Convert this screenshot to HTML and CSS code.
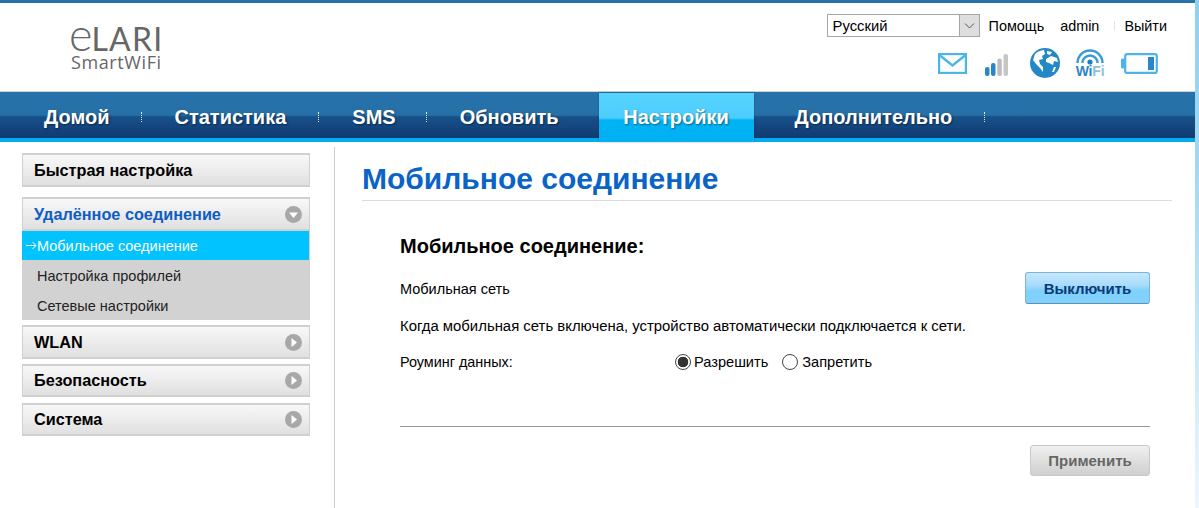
FILE: index.html
```html
<!DOCTYPE html>
<html lang="ru">
<head>
<meta charset="utf-8">
<title>Мобильное соединение</title>
<link rel="stylesheet" href="styles.css">
</head>
<body>
<div class="shell">
<div class="page">
  <header class="header">
    <div class="logo">
      <div class="logo-main"><span class="logo-e">e</span>LARI</div>
      <div class="logo-sub">SmartWiFi</div>
    </div>
    <div class="header-right">
      <div class="top-links">
        <div class="lang"><span class="lang-value">Русский</span><span class="lang-btn"><svg width="11" height="6" viewBox="0 0 11 6"><path d="M1 0.5 L5.5 5 L10 0.5" fill="none" stroke="#555" stroke-width="1"/></svg></span></div>
        <span class="tl tl-help">Помощь</span>
        <span class="tl tl-admin">admin</span>
        <span class="tl-sep"></span>
        <span class="tl">Выйти</span>
      </div>
      <div class="status-icons">
        <svg class="ic-mail" width="29" height="21" viewBox="0 0 29 21"><rect x="1.1" y="1.1" width="26.8" height="18.8" fill="#fff" stroke="#4db4e8" stroke-width="2.2"/><path d="M2 2.5 L14.5 12.5 L27 2.5" fill="none" stroke="#4db4e8" stroke-width="2.4"/></svg>
        <svg class="ic-signal" width="23" height="22" viewBox="0 0 23 22"><rect x="0" y="13" width="4.5" height="9" rx="2" fill="#2a86c6"/><rect x="6" y="9" width="4.5" height="13" rx="2" fill="#2a86c6"/><rect x="12.3" y="4.5" width="4.5" height="17.5" rx="2" fill="#bdbdbd"/><rect x="18.5" y="0" width="4.5" height="22" rx="2" fill="#c6c6c6"/></svg>
        <svg class="ic-globe" width="30" height="30" viewBox="0 0 30 30"><circle cx="15" cy="15" r="15" fill="#2288c6"/><path d="M5 6 C8 3 12 2 14 2 L15 6 L12 8 L13 11 L9 12 L10 16 L13 19 L13 24 L10 20 L6 16 L3 12 Z" fill="#fff"/><path d="M17 3 L22 4 L20 7 L17 6 Z M16 11 L21 8 L27 10 L28 14 L24 13 L23 17 L19 15 L16 14 Z M24 19 L26 19 L24 24 L22 24 Z" fill="#fff"/></svg>
        <span class="ic-wifi">
          <svg width="28" height="16" viewBox="0 0 28 16"><g fill="none" stroke="#3a9ad6" stroke-width="2.4"><path d="M1.5 14 A12.5 12.5 0 0 1 26.5 14"/><path d="M6.5 14 A7.5 7.5 0 0 1 21.5 14"/></g><circle cx="14" cy="13" r="2.6" fill="#1f7fbe"/></svg>
          <span class="wifi-text"><b>Wi</b><i>Fi</i></span>
        </span>
        <svg class="ic-battery" width="37" height="21" viewBox="0 0 37 21"><rect x="0" y="5.5" width="4" height="10" rx="1.5" fill="#4db4e8"/><rect x="4.2" y="1.1" width="31.6" height="18.8" rx="2" fill="#fff" stroke="#4db4e8" stroke-width="2.2"/><rect x="27" y="4" width="6" height="13" fill="#2a86c6"/></svg>
      </div>
    </div>
  </header>
  <nav class="nav">
    <a class="nav-item nav-1">Домой</a><span class="dots"></span>
    <a class="nav-item">Статистика</a><span class="dots"></span>
    <a class="nav-item nav-3">SMS</a><span class="dots"></span>
    <a class="nav-item nav-4">Обновить</a>
    <a class="nav-item active">Настройки</a>
    <a class="nav-item nav-6">Дополнительно</a><span class="dots"></span>
  </nav>
  <div class="main">
    <aside class="sidebar">
      <div class="side-btn side-quick">Быстрая настройка</div>
      <div class="side-btn side-open"><span>Удалённое соединение</span><svg class="arrow" width="17" height="17" viewBox="0 0 17 17"><circle cx="8.5" cy="8.5" r="8.5" fill="#a8a8a8"/><path d="M4 6.5 H13 L8.5 12 Z" fill="#fff"/></svg></div>
      <div class="sub">
        <div class="sub-item sub-active"><svg class="sub-arrow" width="11" height="9" viewBox="0 0 11 9"><path d="M0 4.5 H10 M6.5 1 L10 4.5 L6.5 8" fill="none" stroke="#fff" stroke-width="1"/></svg><span>Мобильное соединение</span></div>
        <div class="sub-item">Настройка профилей</div>
        <div class="sub-item">Сетевые настройки</div>
      </div>
      <div class="side-btn side-next"><span>WLAN</span><svg class="arrow" width="17" height="17" viewBox="0 0 17 17"><circle cx="8.5" cy="8.5" r="8.5" fill="#a8a8a8"/><path d="M6.5 4 V13 L12 8.5 Z" fill="#fff"/></svg></div>
      <div class="side-btn side-next side-short"><span>Безопасность</span><svg class="arrow" width="17" height="17" viewBox="0 0 17 17"><circle cx="8.5" cy="8.5" r="8.5" fill="#a8a8a8"/><path d="M6.5 4 V13 L12 8.5 Z" fill="#fff"/></svg></div>
      <div class="side-btn side-next side-short side-last"><span>Система</span><svg class="arrow" width="17" height="17" viewBox="0 0 17 17"><circle cx="8.5" cy="8.5" r="8.5" fill="#a8a8a8"/><path d="M6.5 4 V13 L12 8.5 Z" fill="#fff"/></svg></div>
    </aside>
    <section class="content">
      <h1 class="title">Мобильное соединение</h1>
      <div class="panel">
        <h2 class="subtitle">Мобильное соединение:</h2>
        <div class="row-network">
          <span class="net-label">Мобильная сеть</span>
          <button class="btn btn-off">Выключить</button>
        </div>
        <p class="note">Когда мобильная сеть включена, устройство автоматически подключается к сети.</p>
        <div class="row-roaming">
          <span class="roam-label">Роуминг данных:</span>
          <span class="radio on"></span><span class="radio-text">Разрешить</span>
          <span class="radio"></span><span class="radio-text radio-text-2">Запретить</span>
        </div>
        <div class="footer">
          <button class="btn btn-apply">Применить</button>
        </div>
      </div>
    </section>
  </div>
</div>
<div class="edge"></div>
</div>
</body>
</html>
```

FILE: styles.css
```css
* { box-sizing: border-box; }
html, body { margin: 0; padding: 0; }
body { font-family: "Liberation Sans", Arial, sans-serif; color: #000; background: #fff; overflow: hidden; }
.shell { display: flex; width: 1199px; height: 508px; overflow: hidden; }
.page { width: 1195px; height: 508px; flex: none; border-top: 3px solid #2872aa; }
.edge { flex: 1; background: linear-gradient(#8fd0ee, #a4d9f2 35%, #eef7fc); }

.header { height: 88px; display: flex; justify-content: space-between; }
.logo { margin: 16px 0 0 69px; color: #666; width: 100px; }
.logo-main { font-family: Lato, "Liberation Sans", sans-serif; font-size: 32px; line-height: 30px; height: 30px; letter-spacing: 1.2px; font-weight: 400; white-space: nowrap; }
.logo-e { font-size: 45px; line-height: 30px; letter-spacing: -1px; font-weight: 300; }
.logo-sub { font-family: "Open Sans", "Liberation Sans", sans-serif; font-size: 18px; line-height: 18px; margin: 4px 0 0 2px; font-weight: 400; letter-spacing: 0.6px; white-space: nowrap; }
.header-right { display: flex; flex-direction: column; align-items: flex-end; padding: 11px 28px 0 0; }
.top-links { display: flex; align-items: center; height: 23px; font-size: 14.4px; }
.lang { width: 153px; height: 23px; border: 1px solid #a6a6a6; display: flex; justify-content: space-between; background: #fff; margin-right: 9px; }
.lang-value { padding-left: 5px; line-height: 22px; font-size: 14.8px; }
.lang-btn { width: 20px; background: #dedede; border-left: 1px solid #a6a6a6; display: flex; align-items: center; justify-content: center; }
.tl { line-height: 24px; white-space: nowrap; }
.tl-help { margin-right: 16px; }
.tl-admin { margin-right: 15px; }
.tl-sep { width: 1px; height: 10px; background: #e2e2e2; margin-right: 9px; }
.status-icons { display: flex; align-items: center; margin-top: 10px; padding-right: 9px; height: 32px; }
.ic-mail { margin-right: 18px; }
.ic-signal { margin-right: 22px; margin-top: 3px; }
.ic-globe { margin-right: 16px; }
.ic-wifi { width: 28px; margin-right: 17px; display: flex; flex-direction: column; align-items: center; }
.wifi-text { font-size: 14px; line-height: 13px; color: #2a86c6; font-weight: 700; white-space: nowrap; font-family: "Liberation Sans", sans-serif; letter-spacing: -0.2px; }
.wifi-text i { font-style: normal; color: #8fbfdc; }

.nav { height: 51px; display: flex; align-items: flex-start; border-top: 1px solid #d0d0d0; background: linear-gradient(#2872ab 0, #2670a8 23px, #175089 25px, #113a72 46px, #00aeef 46px, #00aeef 51px); padding-left: 19px; }
.nav-item { display: block; height: 50px; padding: 0 32px 0 33px; line-height: 51px; font-size: 20px; font-weight: 700; color: #fff; text-shadow: 1px 1px 2px rgba(0,0,0,.45); white-space: nowrap; }
.nav-1 { padding-left: 25px; padding-right: 31px; }
.nav-3 { padding-right: 30px; }
.nav-4 { padding-left: 33px; padding-right: 40px; }
.nav-6 { padding-left: 41px; padding-right: 32px; }
.dots { width: 1px; height: 10px; margin-top: 20px; border-left: 1px dotted #dfe8f0; flex: none; }
.nav-item.active { background: linear-gradient(#56d4ff 0, #4ccdfd 25px, #00b4f4 27px, #00b0f2 100%); width: 155px; padding: 0; margin-top: 1px; line-height: 49px; height: 49px; text-align: center; box-shadow: 0 0 2px rgba(0,0,0,.3); }

.main { display: flex; height: 366px; }
.sidebar { width: 335px; height: 361px; margin-top: 5px; padding: 6px 24px 0 22px; border-right: 1px solid #d0d0d0; }
.side-btn { height: 34px; width: 288px; display: flex; align-items: center; justify-content: space-between; padding: 1px 7px 0 11px; font-size: 16.25px; font-weight: 700; border: 1px solid #d0d0d0; border-top-width: 2px; border-bottom-width: 2px; background: linear-gradient(#f8f8f8, #e0e0e0); }
.side-open { margin-top: 10px; color: #0f5dc4; }
.sub { background: #d2d2d2; height: 89px; width: 288px; }
.sub-item { height: 30px; font-size: 14.5px; line-height: 33px; padding-left: 15px; color: #222; }
.sub-active { background: #00c3ff; color: #fff; height: 29px; line-height: 30px; width: 287px; display: flex; align-items: center; padding-left: 4px; }
.sub-arrow { flex: none; }
.side-next { margin-top: 5px; }
.side-short { height: 33px; padding-top: 0; }
.side-last { margin-top: 6px; }

.content { flex: 1; padding-left: 27px; padding-right: 23px; }
.title { margin: 0; height: 59px; padding-top: 20px; font-size: 30px; line-height: 34px; font-weight: 700; color: #0a64c8; border-bottom: 1px solid #dcdcdc; width: 810px; }
.panel { width: 750px; margin-left: 38px; }
.subtitle { margin: 34px 0 0; font-size: 20px; line-height: 22px; font-weight: 700; }
.row-network { display: flex; justify-content: space-between; align-items: center; margin-top: 15px; font-size: 14.5px; height: 32px; }
.net-label { padding-top: 1px; }
.btn { font-family: "Liberation Sans", Arial, sans-serif; font-size: 15px; font-weight: 700; border-radius: 3px; padding: 0; }
.btn-off { width: 125px; height: 32px; color: #0c3a78; border: 1px solid #7fb2d4; border-bottom-color: #5d90b4; background: linear-gradient(#c4e8fc 0, #a8dcfb 40%, #7fd0fb 60%, #82d2fc 100%); }
.note { margin: 13px 0 0; font-size: 14.9px; line-height: 18px; }
.row-roaming { display: flex; align-items: center; margin-top: 17px; height: 20px; font-size: 14.6px; }
.roam-label { width: 275px; font-size: 14.4px; }
.radio { width: 16px; height: 16px; border-radius: 50%; border: 1px solid #444; background: #fff; margin-right: 3px; flex: none; }
.radio.on { background: radial-gradient(circle, #333 0 5px, #fff 5.6px); }
.radio-text { margin-right: 14px; }
.radio-text-2 { margin-left: 1px; }
.footer { margin-top: 54px; border-top: 1px solid #999; padding-top: 18px; display: flex; justify-content: flex-end; }
.btn-apply { width: 120px; height: 31px; color: #666; border: 1px solid #c8c8c8; background: linear-gradient(#f0f0f0, #cfcfcf); }
```
